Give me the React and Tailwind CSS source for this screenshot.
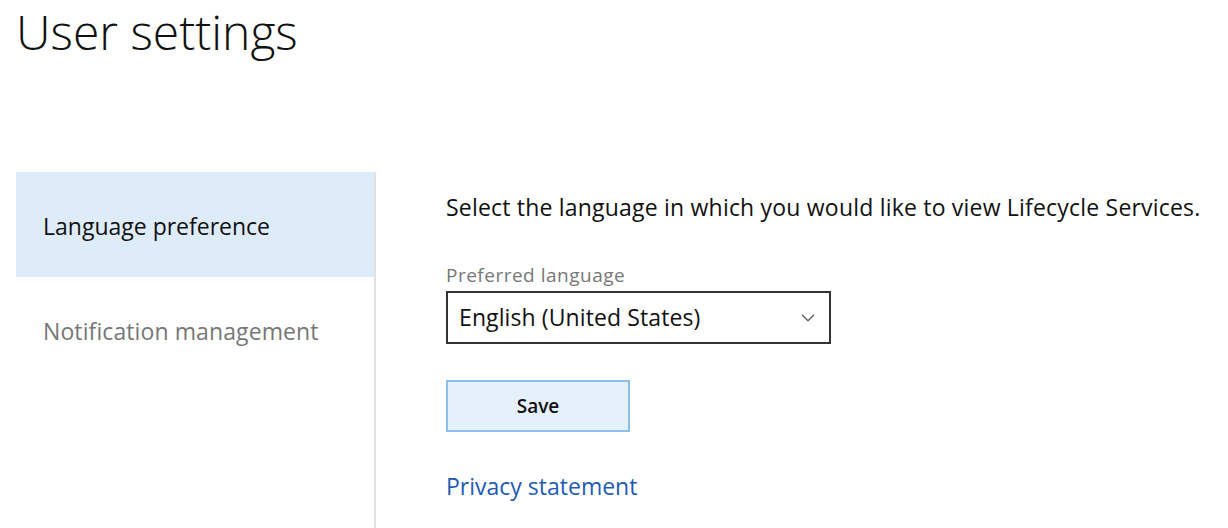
import { ChevronDown } from 'lucide-react'

const FONT = "font-['Open_Sans','Noto_Sans',sans-serif]"

function NavItem({ label, active }) {
  return (
    <div
      className={
        'h-[105px] flex items-center pt-[4px] pl-[27px] text-[23px] ' +
        (active ? 'bg-[#deebf8] text-[#111]' : 'text-[#777] tracking-[0.1px]')
      }
    >
      {label}
    </div>
  )
}

export default function App() {
  return (
    <div className={`${FONT} w-[1228px] h-[528px] bg-white overflow-hidden`}>
      <h1 className="pl-[16px] pt-[2px] text-[48px] font-light leading-[60px] text-[#111]">
        User settings
      </h1>

      <div className="flex mt-[110px] ml-[16px]">
        {/* nav */}
        <div className="w-[360px] h-[360px] border-r-2 border-[#e1e1e1] flex flex-col">
          <NavItem label="Language preference" active />
          <NavItem label="Notification management" />
        </div>

        {/* content */}
        <div className="pl-[70px] pt-[20px] flex flex-col items-start">
          <p className="text-[23px] leading-[30px] text-[#111] tracking-[0.2px]">
            Select the language in which you would like to view Lifecycle Services.
          </p>

          <label className="mt-[40px] text-[19px] leading-[26px] text-[#777] tracking-[0.5px]">
            Preferred language
          </label>
          <div className="mt-[3px] w-[385px] h-[53px] border-2 border-[#333] flex items-center justify-between pl-[11px] pr-[10px]">
            <span className="text-[23px] text-[#111] tracking-[0.1px]">English (United States)</span>
            <ChevronDown size={22} strokeWidth={1.3} className="text-[#555]" />
          </div>

          <button className="mt-[36px] w-[184px] h-[52px] bg-[#e6f0fa] border-2 border-[#8ebfea] text-[19px] font-semibold text-[#111]">
            Save
          </button>

          <a className="mt-[39px] text-[23px] leading-[30px] text-[#1f5bb4] cursor-pointer">
            Privacy statement
          </a>
        </div>
      </div>
    </div>
  )
}
